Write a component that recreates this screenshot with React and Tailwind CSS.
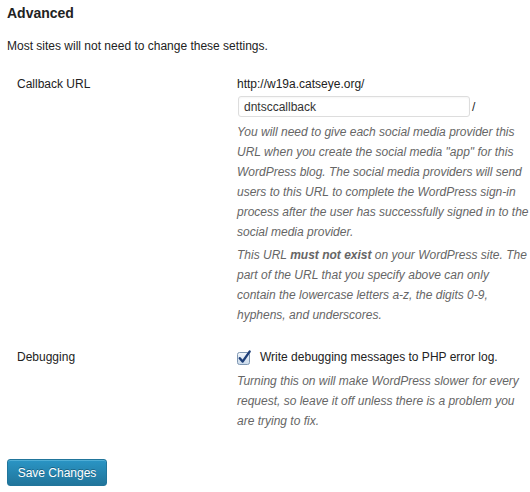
import React from "react";

function Check() {
  return (
    <svg width="15" height="15" viewBox="0 0 15 15" className="block">
      <defs>
        <linearGradient id="cb" x1="0" y1="0" x2="0" y2="1">
          <stop offset="0" stopColor="#f4f8fc" />
          <stop offset="1" stopColor="#c9d9ea" />
        </linearGradient>
      </defs>
      <rect x="0.5" y="2.5" width="12" height="12" rx="2" fill="url(#cb)" stroke="#7f97b2" />
      <path d="M2.8 8.2 L5.6 11.6 L12.6 1.6" fill="none" stroke="#1f3f78" strokeWidth="2.4" strokeLinecap="round" strokeLinejoin="round" />
    </svg>
  );
}

export default function App() {
  return (
    <div className="w-[530px] h-[492px] bg-white font-['Liberation_Sans',Arial,sans-serif] text-[12px] text-[#222] pl-[7px] overflow-hidden">
      <h3 className="text-[14px] font-bold leading-[16px] pt-[5px] text-[#222]">Advanced</h3>
      <p className="mt-[17px] leading-[16px]">Most sites will not need to change these settings.</p>

      <div className="flex mt-[22px]">
        <div className="w-[230px] pl-[10px] leading-[16px] shrink-0">Callback URL</div>
        <div className="flex-1">
          <div className="leading-[16px]">http://w19a.catseye.org/</div>
          <div className="flex items-center mt-[4px]">
            <div className="ml-[1px] w-[232px] h-[21px] border border-[#dddddd] rounded-[3px] bg-white pl-[5px] flex items-center leading-[16px] text-[#333] shadow-[inset_0_1px_2px_rgba(0,0,0,0.04)]">
              dntsccallback
            </div>
            <span className="ml-[2px] leading-[16px]">/</span>
          </div>
          <p className="mt-[5px] italic text-[#666] leading-[20px] whitespace-nowrap">
            You will need to give each social media provider this<br />
            URL when you create the social media "app" for this<br />
            WordPress blog. The social media providers will send<br />
            users to this URL to complete the WordPress sign-in<br />
            process after the user has successfully signed in to the<br />
            social media provider.
          </p>
          <p className="mt-[3px] italic text-[#666] leading-[20px] whitespace-nowrap">
            This URL <b className="font-bold">must not exist</b> on your WordPress site. The<br />
            part of the URL that you specify above can only<br />
            contain the lowercase letters a-z, the digits 0-9,<br />
            hyphens, and underscores.
          </p>
        </div>
      </div>

      <div className="flex mt-[24px]">
        <div className="w-[230px] pl-[10px] leading-[16px] shrink-0">Debugging</div>
        <div className="flex-1">
          <div className="flex items-center h-[16px]">
            <Check />
            <span className="ml-[8px] leading-[16px]">Write debugging messages to PHP error log.</span>
          </div>
          <p className="mt-[6px] italic text-[#666] leading-[20px] whitespace-nowrap">
            Turning this on will make WordPress slower for every<br />
            request, so leave it off unless there is a problem you<br />
            are trying to fix.
          </p>
        </div>
      </div>

      <button className="mt-[28px] w-[100px] h-[27px] rounded-[3px] border border-[#21759b] bg-gradient-to-b from-[#2a95c5] to-[#21759b] text-white text-[12px] leading-[16px] [text-shadow:0_-1px_0_rgba(0,0,0,0.3)] shadow-[inset_0_1px_0_rgba(120,200,230,0.5)] block">
        Save Changes
      </button>
    </div>
  );
}
